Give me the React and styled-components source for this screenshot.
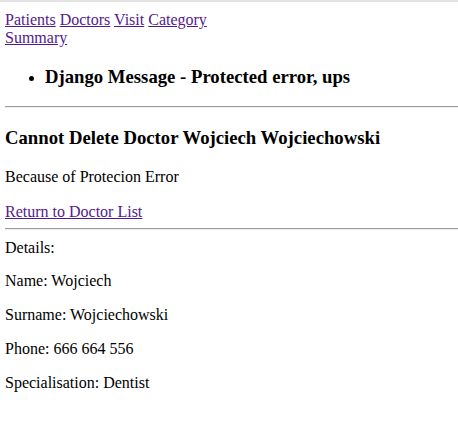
import React from "react";
import styled, { createGlobalStyle } from "styled-components";

const GlobalStyle = createGlobalStyle`
  html {
    background: #fff;
  }
  body {
    margin: 0;
    padding: 9px 0 8px 5px;
    border-top: 2px solid #e4e4e4;
    font-family: "Liberation Serif", "Times New Roman", serif;
    font-size: 16px;
    color: #000;
  }
`;

const Page = styled.div``;

const Nav = styled.nav`
  max-width: 210px;
  line-height: 18px;
`;

const Link = styled.a`
  color: #551a8b;
  text-decoration: underline;
  cursor: pointer;
`;

const Messages = styled.ul`
  margin: 16px 0;
  padding-left: 40px;

  li h3 {
    margin: 18.72px 0;
    font-size: 18.72px;
    font-weight: bold;
  }
`;

const Rule = styled.hr`
  margin: 8px 0;
  border: 0;
  border-top: 1px solid #9a9a9a;
  border-bottom: 1px solid #eee;
  height: 0;
`;

const Title = styled.h3`
  margin: 18.72px 0;
  font-size: 18.72px;
  font-weight: bold;
`;

const Text = styled.p`
  margin: 16px 0;
`;

const Back = styled.div`
  padding-top: 1px;
  margin-bottom: -1px;
`;

const Details = styled.div`
  line-height: 18px;
  padding-top: 1px;
  margin-bottom: -1px;
`;

export default function App() {
  const doctor = {
    name: "Wojciech",
    surname: "Wojciechowski",
    phone: "666 664 556",
    specialisation: "Dentist",
  };

  return (
    <>
      <GlobalStyle />
      <Page>
        <Nav>
          <Link>Patients</Link> <Link>Doctors</Link> <Link>Visit</Link>{" "}
          <Link>Category</Link> <Link>Summary</Link>
        </Nav>
        <Messages>
          <li>
            <h3>Django Message - Protected error, ups</h3>
          </li>
        </Messages>
        <Rule />
        <Title>
          Cannot Delete Doctor {doctor.name} {doctor.surname}
        </Title>
        <Text>Because of Protecion Error</Text>
        <Back>
          <Link>Return to Doctor List</Link>
        </Back>
        <Rule />
        <Details>Details:</Details>
        <Text>Name: {doctor.name}</Text>
        <Text>Surname: {doctor.surname}</Text>
        <Text>Phone: {doctor.phone}</Text>
        <Text>Specialisation: {doctor.specialisation}</Text>
      </Page>
    </>
  );
}
